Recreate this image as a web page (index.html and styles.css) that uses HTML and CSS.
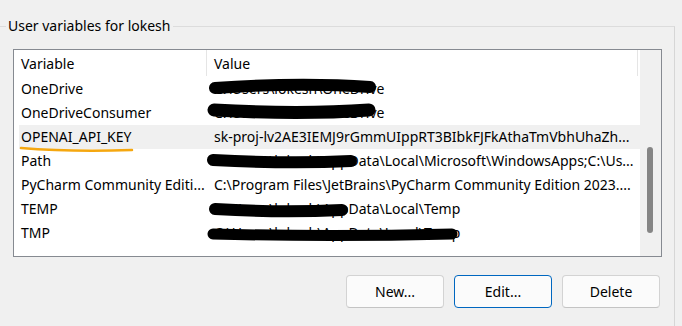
FILE: index.html
```html
<!DOCTYPE html>
<html lang="en">
<head>
    <meta charset="UTF-8">
    <title>Environment Variables</title>
    <link rel="stylesheet" href="styles.css">
</head>
<body>
    <fieldset class="group">
        <legend>User variables for lokesh</legend>

        <div class="listview">
            <div class="table">
                <div class="header">
                    <div class="hcell">Variable</div>
                    <div class="hcell">Value</div>
                </div>
                <div class="row">
                    <div class="cell">OneDrive</div>
                    <div class="cell">C:\Users\lokesh\OneDrive</div>
                </div>
                <div class="row">
                    <div class="cell">OneDriveConsumer</div>
                    <div class="cell">C:\Users\lokesh\OneDrive</div>
                </div>
                <div class="row selected">
                    <div class="cell">OPENAI_API_KEY</div>
                    <div class="cell">sk-proj-lv2AE3IEMJ9rGmmUIppRT3BIbkFJFkAthaTmVbhUhaZh...</div>
                </div>
                <div class="row">
                    <div class="cell">Path</div>
                    <div class="cell">C:\Users\lokesh\AppData\Local\Microsoft\WindowsApps;C:\Us...</div>
                </div>
                <div class="row">
                    <div class="cell">PyCharm Community Editi...</div>
                    <div class="cell">C:\Program Files\JetBrains\PyCharm Community Edition 2023....</div>
                </div>
                <div class="row">
                    <div class="cell">TEMP</div>
                    <div class="cell">C:\Users\lokesh\AppData\Local\Temp</div>
                </div>
                <div class="row">
                    <div class="cell">TMP</div>
                    <div class="cell">C:\Users\lokesh\AppData\Local\Temp</div>
                </div>
            </div>
            <div class="scrollbar">
                <div class="thumb"></div>
            </div>
        </div>

        <div class="buttons">
            <button type="button">New...</button>
            <button type="button" class="default">Edit...</button>
            <button type="button">Delete</button>
        </div>
    </fieldset>

    <!-- redaction scribbles and highlight drawn on top of the screenshot -->
    <svg class="marks" width="682" height="326" viewBox="0 0 682 326">
        <g fill="none" stroke="#000" stroke-linecap="round">
            <path d="M215 88 Q 300 82 370 87" stroke-width="12"/>
            <path d="M214 110 Q 300 115 369 110" stroke-width="13"/>
            <path d="M213 160 Q 290 164 351 161" stroke-width="12"/>
            <path d="M215 209 Q 280 213 342 210" stroke-width="12"/>
            <path d="M213 234 Q 330 237 452 234" stroke-width="11"/>
        </g>
        <path d="M21 148 Q 70 152 132 150" fill="none" stroke="#f5a70f" stroke-width="2.5" stroke-linecap="round"/>
    </svg>
</body>
</html>
```

FILE: styles.css
```css
html, body {
    margin: 0;
    overflow: hidden;
}
body {
    background: #f0f0f0;
    font-family: "Noto Sans", "Open Sans", sans-serif;
    font-size: 14px;
    color: #000;
    height: 326px;
    position: relative;
}
.group {
    box-sizing: border-box;
    width: 676px;
    height: 310px;
    margin: 16px 0 0 -1px;
    padding: 13px 0 0 13px;
    border: 1px solid #dcdcdc;
    border-right-color: #d6d6d6;
    border-bottom: none;
}
.group legend {
    margin-left: -7px;
    padding: 0 3px 0 2px;
    line-height: 20px;
}
.listview {
    box-sizing: border-box;
    width: 649px;
    height: 208px;
    border: 1px solid #868a91;
    background: #fff;
    display: grid;
    grid-template-columns: 1fr 21px;
}
.table {
    overflow: hidden;
}
.header {
    display: grid;
    grid-template-columns: 193px 431px;
    height: 27px;
}
.hcell {
    padding: 1px 0 0 7px;
    line-height: 25px;
    border-right: 1px solid #e5e5e5;
    margin-bottom: 1px;
    white-space: nowrap;
}
.row {
    display: grid;
    grid-template-columns: 188px 1fr;
    height: 24px;
    line-height: 24px;
    margin-left: 5px;
}
.row.selected {
    background: #f0f0f0;
}
.cell {
    padding-left: 2px;
    white-space: nowrap;
    overflow: hidden;
}
.cell + .cell {
    padding-left: 7px;
    padding-right: 4px;
}
.scrollbar {
    background: #f0f0f0;
    padding: 97px 0 0 7px;
}
.thumb {
    width: 6px;
    height: 86px;
    border-radius: 3px;
    background: #858585;
}
.buttons {
    width: 647px;
    margin-top: 18px;
    display: flex;
    justify-content: flex-end;
    gap: 10px;
}
.buttons button {
    width: 98px;
    height: 33px;
    font: inherit;
    color: #000;
    background: #fbfbfb;
    border: 1px solid #d3d3d3;
    border-bottom-color: #c4c4c4;
    border-radius: 4px;
    padding: 0;
}
.buttons button.default {
    border-color: #0067c0;
}
.marks {
    position: absolute;
    top: 0;
    left: 0;
    pointer-events: none;
}
```
